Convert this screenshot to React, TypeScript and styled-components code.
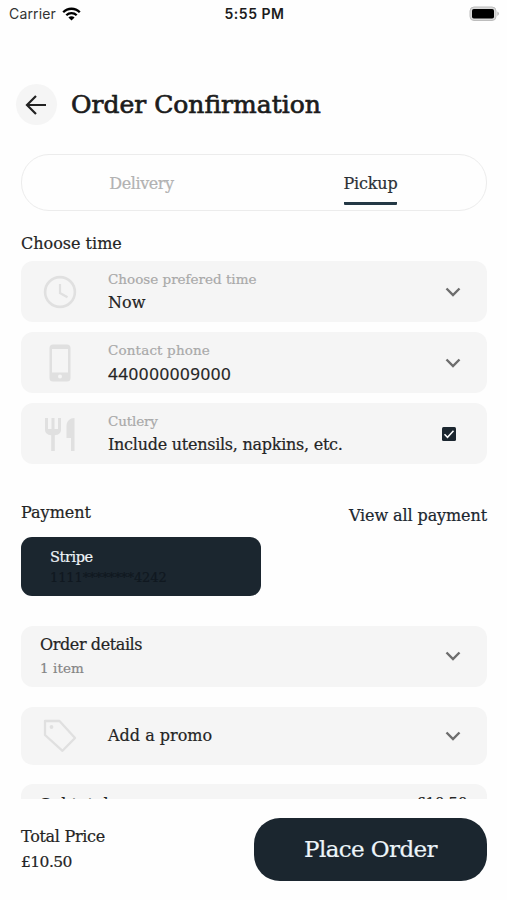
import React from 'react';
import styled, { createGlobalStyle } from 'styled-components';

const ink = '#1b262f';

const GlobalStyle = createGlobalStyle`
  *, *::before, *::after { box-sizing: border-box; }
  body { margin: 0; background: #fefefe; }
  button { font: inherit; border: 0; padding: 0; background: none; }
`;

const Screen = styled.div`
  display: flex;
  flex-direction: column;
  width: 507px;
  height: 900px;
  overflow: hidden;
  background: #fefefe;
  color: #242424;
  font-family: 'DejaVu Serif', serif;
  font-size: 16px;
  line-height: 20px;
  white-space: nowrap;
  -webkit-text-stroke-width: 0.2px;
`;

const StatusBar = styled.div`
  display: grid;
  grid-template-columns: 1fr auto 1fr;
  align-items: center;
  height: 28px;
  padding: 0 7px 0 9px;
  font-family: Inter, sans-serif;
  font-size: 14px;
  -webkit-text-stroke-width: 0;
`;

const Carrier = styled.div`
  display: flex;
  align-items: center;
  gap: 6px;
  letter-spacing: 0.15px;
  color: #333;
`;

const Clock = styled.div`
  font-weight: 600;
  letter-spacing: 0.5px;
  color: #1c1c1c;
`;

const Battery = styled.svg`
  justify-self: end;
`;

const Header = styled.header`
  display: flex;
  align-items: flex-start;
  gap: 14px;
  height: 41px;
  margin-top: 56px;
  padding-left: 16px;
`;

const BackButton = styled.button`
  display: grid;
  place-items: center;
  width: 41px;
  height: 41px;
  padding: 1px 2px 0 0;
  border-radius: 50%;
  background: #f5f5f5;
`;

const Title = styled.h1`
  margin: 5px 0 0;
  font-size: 25px;
  line-height: 32px;
  font-weight: 400;
  -webkit-text-stroke: 0.7px #1c1c1c;
  color: #1c1c1c;
`;

const Content = styled.main`
  display: flex;
  flex-direction: column;
  height: 674px;
  overflow: hidden;
  padding: 29px 20px 0 21px;
`;

const Tabs = styled.div`
  display: grid;
  grid-template-columns: 1fr 1fr;
  justify-items: center;
  flex: none;
  height: 57px;
  padding: 0 1px 0 5px;
  border: 1px solid #ececec;
  border-radius: 28px;
`;

const Tab = styled.button<{ $active?: boolean }>`
  height: 50px;
  padding-top: 11px;
  letter-spacing: ${p => (p.$active ? '-0.2px' : '-0.4px')};
  color: ${p => (p.$active ? '#2b3036' : '#b2b2b2')};
  border-bottom: 3px solid ${p => (p.$active ? '#243845' : 'transparent')};
  border-radius: 1px;
`;

const SectionTitle = styled.h2`
  margin: 0;
  font-size: 16px;
  line-height: 20px;
  font-weight: 400;
`;

const TimeTitle = styled(SectionTitle)`
  margin-top: 23px;
`;

const Options = styled.div`
  display: flex;
  flex-direction: column;
  gap: 10px;
  margin-top: 7px;
`;

const Card = styled.div<{ $height?: number; $top?: number }>`
  display: flex;
  align-items: center;
  flex: none;
  height: ${p => p.$height ?? 61}px;
  margin-top: ${p => p.$top ?? 0}px;
  padding: 0 25px 0 19px;
  border-radius: 12px;
  background: #f5f5f5;
`;

const IconSlot = styled.div`
  display: grid;
  place-items: center;
  width: 40px;
  margin-right: 28px;
  color: #e0e0e0;
`;

const Lines = styled.div<{ $gap?: number }>`
  flex: 1;
  display: flex;
  flex-direction: column;
  gap: ${p => p.$gap ?? 4}px;
`;

const OptionLines = styled(Lines)`
  padding-bottom: 1px;
`;

const Label = styled.span<{ $tone?: string; $tracking?: number }>`
  font-size: 13.5px;
  letter-spacing: ${p => p.$tracking ?? 0}px;
  color: ${p => p.$tone ?? '#a9a9a9'};
`;

const Value = styled.span<{ $tracking?: number }>`
  letter-spacing: ${p => p.$tracking ?? 0}px;
  color: #242424;
`;

const Digits = styled(Value)`
  font-family: 'Noto Sans', sans-serif;
  font-size: 17px;
`;

const Trailing = styled.div`
  display: grid;
  place-items: center;
  width: 18px;
`;

const CheckSlot = styled(Trailing)`
  margin-right: 4px;
`;

const PaymentHead = styled.div`
  display: flex;
  justify-content: space-between;
  margin-top: 39px;
`;

const ViewAll = styled.button`
  margin-top: 3px;
  height: 20px;
  letter-spacing: -0.1px;
  color: ${ink};
`;

const PaymentCard = styled.div`
  display: flex;
  flex-direction: column;
  flex: none;
  gap: 1px;
  width: 239.5px;
  height: 59px;
  margin-top: 11px;
  padding: 10px 29px;
  border-radius: 11px;
  background: ${ink};
`;

const PayName = styled.span`
  font-size: 14.5px;
  letter-spacing: -0.4px;
  color: #eef4f8;
`;

const PayNumber = styled.span`
  font-size: 13px;
  letter-spacing: -0.1px;
  color: #101820;
`;

const SummaryRow = styled(Card)`
  align-items: flex-start;
  justify-content: space-between;
  padding: 11px 20px 0 19px;
`;

const Footer = styled.footer`
  display: flex;
  justify-content: space-between;
  padding: 19px 20px 0 21px;
`;

const Total = styled.div`
  display: flex;
  flex-direction: column;
  gap: 5px;
  padding-top: 9px;
`;

const Amount = styled.span`
  font-size: 15.5px;
  letter-spacing: -0.55px;
`;

const RowAmount = styled(Amount)`
  margin-top: -2px;
`;

const PlaceOrder = styled.button`
  width: 233px;
  height: 63px;
  padding-bottom: 2px;
  border-radius: 26px;
  background: ${ink};
  color: #edf5fa;
  font-size: 23px;
  letter-spacing: -0.6px;
`;

const Chevron = () => (
  <Trailing>
    <svg width="18" height="12" viewBox="0 0 18 12" fill="none" stroke="#6d6d6d" strokeWidth="2.4">
      <path d="M2.5 2.5 9 9l6.5-6.5" />
    </svg>
  </Trailing>
);

const WifiIcon = () => (
  <svg width="19" height="14" viewBox="0 0 19 14" fill="none" stroke="#000" strokeWidth="2.3">
    <path d="M1.2 5.2a11.7 11.7 0 0 1 16.6 0" />
    <path d="M4.3 8.3a7.4 7.4 0 0 1 10.4 0" />
    <path d="M6.4 10.5a4.4 4.4 0 0 1 6.2 0L9.5 13.6z" fill="#000" stroke="none" />
  </svg>
);

const ClockIcon = () => (
  <svg width="34" height="34" viewBox="0 0 34 34" fill="none" stroke="currentColor" strokeWidth="2.6">
    <circle cx="17" cy="17" r="14.9" />
    <path d="M17 9v9l7.5 4.3" strokeWidth="2.2" />
  </svg>
);

const PhoneIcon = () => (
  <svg width="22" height="38" viewBox="0 0 22 38">
    <path
      fill="currentColor"
      fillRule="evenodd"
      d="M4 .5h14a3.5 3.5 0 0 1 3.5 3.5v30a3.5 3.5 0 0 1-3.5 3.5H4A3.5 3.5 0 0 1 .5 34V4A3.5 3.5 0 0 1 4 .5ZM3 5v23.5h16V5ZM11 30.5a2 2 0 1 0 0 4 2 2 0 0 0 0-4Z"
    />
  </svg>
);

const CutleryIcon = () => (
  <svg width="32" height="34" viewBox="0 0 32 34" fill="currentColor">
    <path d="M1 1h3v11h3.5V1h3v11H14V1h3v12c0 3-2.2 4.8-6.2 5.3V34H7.2V18.3C3.2 17.8 1 16 1 13Z" />
    <path d="M30.5 1v33H27V21h-4.5V9c0-5 3.5-8 8-8Z" />
  </svg>
);

const TagIcon = () => (
  <svg width="34" height="34" viewBox="0 0 34 34" fill="none" stroke="currentColor" strokeWidth="2.3">
    <path d="M2 2h14.5L32 19 19.5 31.8 2 16Z" strokeLinejoin="round" />
    <circle cx="8.5" cy="8" r="1.9" fill="currentColor" stroke="none" />
  </svg>
);

export default function App() {
  return (
    <>
      <GlobalStyle />
      <Screen>
        <StatusBar>
          <Carrier>
            Carrier
            <WifiIcon />
          </Carrier>
          <Clock>5:55 PM</Clock>
          <Battery width="31" height="16" viewBox="0 0 31 16">
            <rect x="1" y="1" width="26" height="13.5" rx="4" fill="#d9d9d9" stroke="#bdbdbd" />
            <rect x="3" y="3" width="22" height="9.5" rx="1.8" fill="#000" />
            <path d="M28.5 5.5q2.5 2.2 0 4.5z" fill="#a0a0a0" />
          </Battery>
        </StatusBar>

        <Header>
          <BackButton aria-label="Back">
            <svg width="22" height="20" viewBox="0 0 22 20" fill="none" stroke="#222" strokeWidth="2.2">
              <path d="M21 10H2.5M11 1 2 10l9 9" />
            </svg>
          </BackButton>
          <Title>Order Confirmation</Title>
        </Header>

        <Content>
          <Tabs>
            <Tab>Delivery</Tab>
            <Tab $active>Pickup</Tab>
          </Tabs>

          <TimeTitle>Choose time</TimeTitle>
          <Options>
            <Card>
              <IconSlot><ClockIcon /></IconSlot>
              <OptionLines>
                <Label>Choose prefered time</Label>
                <Value>Now</Value>
              </OptionLines>
              <Chevron />
            </Card>
            <Card>
              <IconSlot><PhoneIcon /></IconSlot>
              <OptionLines>
                <Label $tracking={0.15}>Contact phone</Label>
                <Digits $tracking={0.56}>440000009000</Digits>
              </OptionLines>
              <Chevron />
            </Card>
            <Card>
              <IconSlot><CutleryIcon /></IconSlot>
              <OptionLines>
                <Label $tracking={-0.15}>Cutlery</Label>
                <Value $tracking={-0.26}>Include utensils, napkins, etc.</Value>
              </OptionLines>
              <CheckSlot>
                <svg width="14" height="14" viewBox="0 0 14 14">
                  <rect width="14" height="14" rx="1.5" fill={ink} />
                  <path d="m2.5 7.3 3 3 6-6.5" fill="none" stroke="#fff" strokeWidth="1.5" />
                </svg>
              </CheckSlot>
            </Card>
          </Options>

          <PaymentHead>
            <SectionTitle>Payment</SectionTitle>
            <ViewAll>View all payment</ViewAll>
          </PaymentHead>
          <PaymentCard>
            <PayName>Stripe</PayName>
            <PayNumber>1111********4242</PayNumber>
          </PaymentCard>

          <Card $top={29.5}>
            <Lines $gap={3}>
              <Value $tracking={-0.4}>Order details</Value>
              <Label $tone="#858585" $tracking={0.1}>1 item</Label>
            </Lines>
            <Chevron />
          </Card>
          <Card $top={20} $height={58}>
            <IconSlot><TagIcon /></IconSlot>
            <Lines><Value>Add a promo</Value></Lines>
            <Chevron />
          </Card>
          <SummaryRow $top={19.5} $height={80}>
            <Value>Subtotal</Value>
            <RowAmount>£10.50</RowAmount>
          </SummaryRow>
        </Content>

        <Footer>
          <Total>
            <Value $tracking={-0.3}>Total Price</Value>
            <Amount>£10.50</Amount>
          </Total>
          <PlaceOrder>Place Order</PlaceOrder>
        </Footer>
      </Screen>
    </>
  );
}
